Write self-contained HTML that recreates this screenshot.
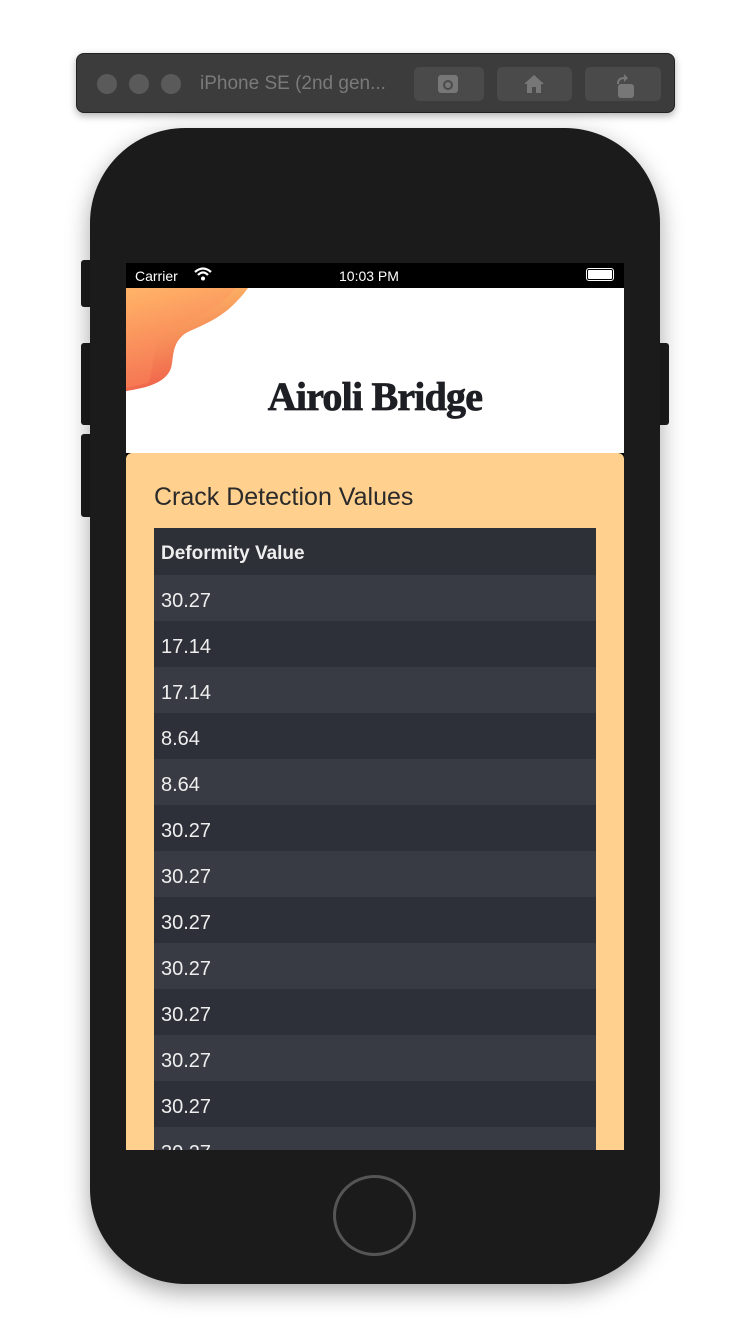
<!DOCTYPE html>
<html><head><meta charset="utf-8"><style>
*{margin:0;padding:0;box-sizing:border-box}
body{width:750px;height:1334px;background:#fff;position:relative;overflow:hidden;font-family:"Liberation Sans",sans-serif}
.abs{position:absolute}
.bar{left:76px;top:53px;width:599px;height:60px;background:#3c3c3c;border-radius:8px;border:1px solid #222;box-shadow:0 3px 8px rgba(0,0,0,.3)}
.dot{width:20px;height:20px;border-radius:50%;background:#5a5a5a;top:20px}
.btn{top:13px;height:34px;background:#4a4a4a;border-radius:5px}
.phone{left:90px;top:128px;width:570px;height:1156px;background:#1b1b1b;border-radius:95px;box-shadow:0 8px 24px rgba(0,0,0,.35)}
.side{background:#1b1b1b;width:12px;border-radius:3px}
.screen{left:126px;top:263px;width:498px;height:887px;background:#000;overflow:hidden}
.row{position:absolute;left:28px;width:442px;height:46px;color:#eee;font-size:20px;padding-left:7px;padding-top:3px;line-height:46px}
</style></head><body>
<div class="abs bar">
<div class="abs dot" style="left:20px"></div><div class="abs dot" style="left:52px"></div><div class="abs dot" style="left:84px"></div>
<div class="abs" style="left:123px;top:19px;color:#7a7a7a;font-size:19px">iPhone SE (2nd gen...</div>
<div class="abs btn" style="left:337px;width:70px"><div class="abs" style="left:24px;top:8px;width:20px;height:18px;background:#777;border-radius:3px"></div><div class="abs" style="left:29px;top:13px;width:10px;height:10px;border:2px solid #4a4a4a;border-radius:50%"></div></div>
<div class="abs btn" style="left:420px;width:75px"><svg class="abs" style="left:25px;top:6px" width="24" height="22"><path d="M2 11 L12 2 L22 11 L19 11 L19 20 L5 20 L5 11Z" fill="#777"/><rect x="10" y="14" width="4" height="6" fill="#4a4a4a"/></svg></div>
<div class="abs btn" style="left:508px;width:76px"><svg class="abs" style="left:24px;top:5px" width="26" height="26"><path d="M8 12 Q8 5 15 5 L15 2 L19 6 L15 10 L15 7 Q10 7 10 12" fill="#777"/><rect x="9" y="12" width="16" height="14" rx="3" fill="#777"/></svg></div>
</div>
<div class="abs side" style="left:81px;top:260px;height:47px"></div>
<div class="abs side" style="left:81px;top:343px;height:82px"></div>
<div class="abs side" style="left:81px;top:434px;height:83px"></div>
<div class="abs side" style="left:657px;top:343px;height:82px"></div>
<div class="abs phone"></div>
<div class="abs" style="left:333px;top:1175px;width:83px;height:81px;border:3px solid #555;border-radius:50%"></div>
<div class="abs screen">
<div class="abs" style="left:9px;top:5px;color:#fff;font-size:14px">Carrier</div>
<svg class="abs" style="left:68px;top:4px" width="18" height="14"><path d="M1 5 Q9 -2 17 5" stroke="#fff" stroke-width="2.2" fill="none"/><path d="M4 8 Q9 3 14 8" stroke="#fff" stroke-width="2.2" fill="none"/><circle cx="9" cy="11.5" r="2" fill="#fff"/></svg>
<div class="abs" style="left:213px;top:5px;color:#fff;font-size:14px">10:03 PM</div>
<div class="abs" style="left:460px;top:5px;width:28px;height:13px;border:1.5px solid #fff;border-radius:3px;padding:1px"><div style="background:#fff;width:100%;height:100%;border-radius:1px"></div></div>
<div class="abs" style="left:0;top:25px;width:498px;height:165px;background:#fff"></div>
<svg class="abs" style="left:0;top:25px" width="130" height="105"><defs><linearGradient id="g" x1="0.2" y1="0" x2="0.5" y2="1"><stop offset="0" stop-color="#ffc36a"/><stop offset="1" stop-color="#ee5a48"/></linearGradient></defs><path d="M0 0 L122 0 C100 30 80 35 60 45 C45 55 48 70 45 80 C40 95 20 100 0 103Z" fill="url(#g)"/><path d="M0 0 L110 0 C90 25 65 30 40 45 C25 58 30 75 22 95 L0 100Z" fill="#ff9060" opacity=".35"/></svg>
<div class="abs" style="left:0;top:110px;width:498px;text-align:center;font-family:'Liberation Serif',serif;font-weight:900;font-size:40px;color:#1d1f24;letter-spacing:-0.8px;-webkit-text-stroke:0.8px #1d1f24">Airoli Bridge</div>
<div class="abs" style="left:0;top:190px;width:498px;height:700px;background:#ffd08e;border-radius:6px 6px 0 0">
<div class="abs" style="left:28px;top:30px;font-size:25px;color:#2a2a2a">Crack Detection Values</div>
<div class="row" style="top:75px;height:47px;background:#2d3037;font-weight:bold;font-size:19px">Deformity Value</div>
<div class="row" style="top:122px;background:#383b43">30.27</div>
<div class="row" style="top:168px;background:#2d3038">17.14</div>
<div class="row" style="top:214px;background:#383b43">17.14</div>
<div class="row" style="top:260px;background:#2d3038">8.64</div>
<div class="row" style="top:306px;background:#383b43">8.64</div>
<div class="row" style="top:352px;background:#2d3038">30.27</div>
<div class="row" style="top:398px;background:#383b43">30.27</div>
<div class="row" style="top:444px;background:#2d3038">30.27</div>
<div class="row" style="top:490px;background:#383b43">30.27</div>
<div class="row" style="top:536px;background:#2d3038">30.27</div>
<div class="row" style="top:582px;background:#383b43">30.27</div>
<div class="row" style="top:628px;background:#2d3038">30.27</div>
<div class="row" style="top:674px;background:#383b43">30.27</div>
</div>
</div>
</body></html>
